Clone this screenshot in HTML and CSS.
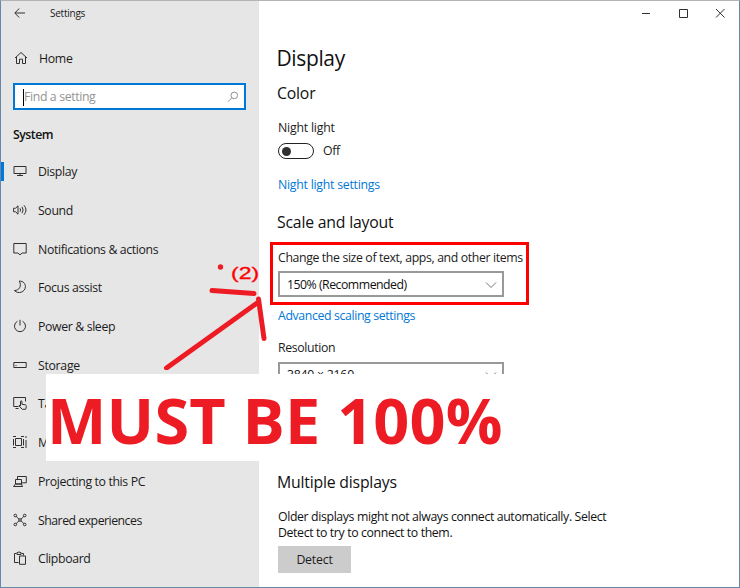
FILE: index.html
```html
<!DOCTYPE html>
<html lang="en">
<head>
<meta charset="utf-8">
<title>Settings</title>
<link rel="stylesheet" href="styles.css">
</head>
<body>
<div class="window">
  <aside class="sidebar">
    <header class="titlebar">
      <svg class="back" width="12" height="12" viewBox="0 0 12 12"><path d="M11 6H1M5.200 1.500L.8 6l4.400 4.500"/></svg>
      <span class="app-name">Settings</span>
    </header>
    <a class="home"><svg width="14" height="14" viewBox="0 0 14 14"><path d="M1 7l6-5.500L13 7M2.500 6v6.500h3V8.200h3v4.300h3V6"/></svg><span class="home-label">Home</span></a>
    <div class="search"><span class="caret"></span><span class="placeholder">Find a setting</span><svg width="12" height="12" viewBox="0 0 12 12"><circle cx="7.300" cy="4.400" r="3.300"/><path d="M4.900 6.800L1 10.700"/></svg></div>
    <h2 class="system"><span>System</span></h2>
    <nav>
      <a class="item active"><svg width="14" height="14" viewBox="0 0 14 14"><path d="M1 2.500h12v7H1zM7 9.500v2M4 11.500h6"/></svg><span>Display</span></a>
      <a class="item"><svg width="14" height="14" viewBox="0 0 14 14"><path d="M.6 5.200h2L5 2.800v8.400L2.600 8.800h-2zM7 5.300q1.200 1.700 0 3.400M9 3.800q2.300 3.200 0 6.400M11 2.300q4 4.700 0 9.400"/></svg><span>Sound</span></a>
      <a class="item"><svg width="14" height="14" viewBox="0 0 14 14"><path d="M.8 1.500h12.400v9.500H9.200L7 12.800 4.800 11h-4z"/></svg><span>Notifications &amp; actions</span></a>
      <a class="item"><svg width="14" height="14" viewBox="0 0 14 14"><path d="M6.300 1c4 .2 6.100 2.500 6.100 5.600 0 5.500-7.200 8-11 3.900C6.200 10.500 9 6.200 6.300 1z"/></svg><span>Focus assist</span></a>
      <a class="item"><svg width="14" height="14" viewBox="0 0 14 14"><path d="M4.400 2.300a5.500 5.500 0 1 0 5.200 0M7 .8v5.700"/></svg><span>Power &amp; sleep</span></a>
      <a class="item"><svg width="14" height="14" viewBox="0 0 14 14"><path d="M.8 4.500h12.400v5H.8zM2.500 7.500h1"/></svg><span class="wide">Storage</span></a>
      <a class="item"><svg width="14" height="14" viewBox="0 0 14 14"><path d="M5.500 10.500H.7v-9h11.800v4M2.500 12.500h3M7.500 10V5.200q.7-.8 1.400 0v3l3.700.7q1 .4.700 1.800l-.6 2.600H9.200L6 9.800l1-.6"/></svg><span>Tablet mode</span></a>
      <a class="item"><svg width="14" height="14" viewBox="0 0 14 14"><path d="M2.500 3.500h6v7h-6zM0 1.500h3M8 1.500h3M0 12.500h3M8 12.500h3M.5 4v6.500M10.500 4v6.500M13 1v2M13 5v8"/></svg><span>Multitasking</span></a>
      <a class="item"><svg width="14" height="14" viewBox="0 0 14 14"><path d="M4.500 5V2.500h8.800v6.300H9M2.500 5.500h6v4.500h-6zM.5 12.500h9l-1-2.500h-6z"/></svg><span>Projecting to this PC</span></a>
      <a class="item"><svg width="14" height="14" viewBox="0 0 14 14"><path d="M3 3.200l3 3M8 7.800l3 3M11 3.200l-3 3M6 7.800l-3 3"/><circle cx="2.300" cy="2.500" r="1.300"/><circle cx="11.700" cy="2.500" r="1.300"/><circle cx="2.300" cy="11.500" r="1.300"/><circle cx="11.700" cy="11.500" r="1.300"/><circle cx="7" cy="7" r="1.300"/></svg><span class="shared">Shared experiences</span></a>
      <a class="item"><svg width="14" height="14" viewBox="0 0 14 14"><path d="M5.500 11.500h-4v-9h2M8.500 2.500h2v2M4 3.500v-2h1Q6 0 7 1.500h1v2zM6.500 5h6v8.300h-6z"/></svg><span>Clipboard</span></a>
    </nav>
  </aside>
  <main>
    <div class="controls">
      <svg width="10" height="10" viewBox="0 0 10 10"><path d="M1 5.500h8"/></svg>
      <svg width="10" height="10" viewBox="0 0 10 10"><path d="M1.500 1.500h8v8h-8z"/></svg>
      <svg width="10" height="10" viewBox="0 0 10 10"><path d="M1 1l8.500 8.500M9.500 1L1 9.500"/></svg>
    </div>
    <h1><span>Display</span></h1>
    <h2 class="color"><span>Color</span></h2>
    <div class="line night"><span>Night light</span></div>
    <div class="toggle-row"><span class="toggle"></span><span>Off</span></div>
    <div class="line night-link"><a class="link">Night light settings</a></div>
    <h2 class="scale"><span>Scale and layout</span></h2>
    <div class="highlight">
      <div class="line"><span>Change the size of text, apps, and other items</span></div>
      <div class="select"><span class="percent">150% (Recommended)</span><svg width="12" height="8" viewBox="0 0 12 8"><path d="M1 1.500l5 5 5-5"/></svg></div>
    </div>
    <div class="line advanced"><a class="link">Advanced scaling settings</a></div>
    <div class="line resolution"><span>Resolution</span></div>
    <div class="select size"><span>3840 × 2160</span><svg width="12" height="8" viewBox="0 0 12 8"><path d="M1 1.500l5 5 5-5"/></svg></div>
    <h2 class="multiple"><span>Multiple displays</span></h2>
    <p><span>Older displays might not always connect automatically. Select</span><br><span>Detect to try to connect to them.</span></p>
    <button><span>Detect</span></button>
  </main>
  <svg class="arrow" width="120" height="120" viewBox="0 0 120 120">
    <circle cx="70.500" cy="17" r="2.700"/>
    <path d="M62 40.500l42 3M108.500 49l5.500 39.500M108.500 52L16.500 118"/>
  </svg>
  <span class="step">(2)</span>
  <div class="banner"><span>MUST BE 100%</span></div>
</div>
</body>
</html>
```
FILE: styles.css
```css
* { box-sizing: border-box; }
body { margin: 0; font: 12.300px/16px "Open Sans", "Noto Sans", sans-serif; letter-spacing: -.37px; color: #1c1c1c; }
.window { position: relative; display: grid; grid-template-columns: 258px 1fr; width: 740px; height: 588px; border: 1px solid #6788ad; border-top-color: #b4b4b4; overflow: hidden; background: #fff; }
h1, h2, p { margin: 0; font-weight: 400; color: #111; }
span, a { white-space: nowrap; }
svg { flex: none; fill: none; stroke: #303030; stroke-width: 1; }
.sidebar { background: #e6e6e6; }
.titlebar { display: flex; align-items: center; height: 24px; padding-left: 13px; }
.app-name { margin-left: 24px; font-size: 10px; letter-spacing: -.25px; }
.home { display: flex; align-items: center; height: 18px; margin-top: 24px; padding-left: 13px; gap: 11px; }
.home-label { padding-top: 2px; letter-spacing: -.4px; }
.search { display: flex; align-items: center; width: 233px; height: 27px; margin: 16px 0 0 12px; padding: 1px 5px 0 8px; border: 2px solid #0078d7; background: #fff; }
.caret { width: 1px; height: 17px; background: #000; }
.placeholder { flex: 1; color: #949494; }
.search svg { stroke: #929292; }
.system { height: 20px; margin: 15px 0 0 12px; font-size: 12.300px; line-height: 20px; font-weight: 600; letter-spacing: -.5px; }
nav { margin-top: 7px; }
.item { position: relative; display: flex; align-items: center; height: 38.700px; padding-left: 12px; gap: 11px; }
.item span { padding-top: 2px; }
.item .wide, .home .home-label { letter-spacing: -.3px; }
.item .shared { letter-spacing: -.5px; }
.active::before { content: ""; position: absolute; left: 0; top: 10px; width: 3px; height: 19px; background: #0078d7; }
main { padding-left: 19px; }
.controls { display: flex; justify-content: flex-end; gap: 27px; height: 24px; padding: 7px 14px 0 0; }
h1 { height: 34px; margin: 16px 0 0 -1.500px; font-size: 21px; line-height: 34px; }
h2 { font-size: 15.800px; line-height: 24px; height: 24px; letter-spacing: -.2px; }
.color { margin: 6px 0 0 -1px; }
.line { height: 16px; }
.night { margin-top: 15px; letter-spacing: -.2px; }
.toggle-row { display: flex; align-items: center; height: 18px; margin-top: 6px; gap: 9px; }
.toggle { width: 36px; height: 16px; padding: 2.500px; border: 1.500px solid #222; border-radius: 8px; }
.toggle::before { content: ""; display: block; width: 9px; height: 9px; border-radius: 50%; background: #303030; }
.night-link { margin-top: 17px; letter-spacing: -.25px; }
.link { color: #0078d7; }
.scale { margin: 17px 0 0 -1px; }
.highlight { width: 259px; height: 63px; margin: 8px 0 0 -8px; padding: 5px 5px; border: 3px solid #f00; }
.select { display: flex; align-items: center; justify-content: space-between; width: 226px; height: 26px; padding: 1px 5px 0 7px; border: 2px solid #999; color: #111; }
.select .percent { letter-spacing: -.5px; }
.highlight .select { margin-top: 5px; }
.select svg { stroke: #777; }
.advanced { margin-top: 3px; }
.resolution { margin-top: 16px; }
.select.size { margin-top: 6px; padding-top: 0; padding-bottom: 1px; letter-spacing: -.25px; }
.multiple { margin: 82px 0 0 -1px; }
p { margin-top: 15px; }
button { display: block; width: 73px; height: 27px; margin-top: 5px; padding: 1px 0 0; border: 0; background: #ccc; font: inherit; letter-spacing: -.2px; color: inherit; }
.arrow { position: absolute; left: 149px; top: 249px; stroke: #ed1c24; stroke-width: 5; stroke-linecap: round; }
.arrow circle { fill: #ed1c24; stroke: none; }
.step { position: absolute; left: 230px; top: 261px; font: 17px/24px "Liberation Sans", sans-serif; letter-spacing: 0; color: #f00; -webkit-text-stroke: .3px #f00; transform: scaleX(1.350); transform-origin: left; }
.banner { position: absolute; left: 45px; top: 373px; width: 459px; height: 87px; padding-left: 1px; background: #fff; font-size: 63px; line-height: 92px; font-weight: 700; letter-spacing: .2px; color: #ed1c24; }
```
